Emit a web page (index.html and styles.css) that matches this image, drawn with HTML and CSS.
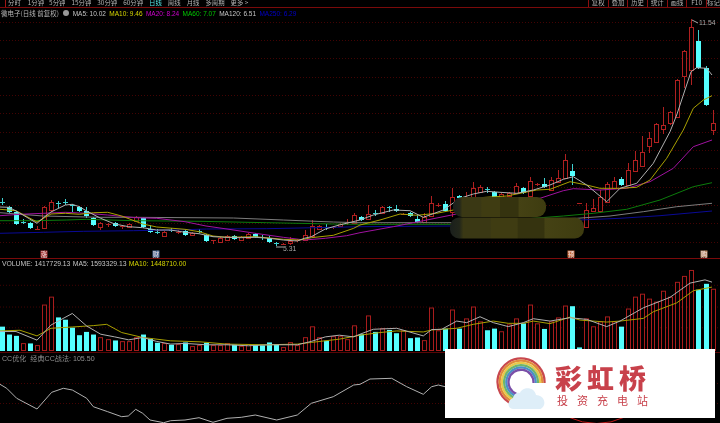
FILE: index.html
```html
<!DOCTYPE html>
<html lang="zh">
<head>
<meta charset="utf-8">
<title>微电子 日线</title>
<link rel="stylesheet" href="styles.css">
</head>
<body>
<div class="screen">
  <nav class="toolbar">
    <div class="periods">
      <span class="tick"></span>
      <span class="p p1">分时</span><span class="p p2">1分钟</span><span class="p p3">5分钟</span><span class="p p4">15分钟</span><span class="p p5">30分钟</span><span class="p p6">60分钟</span><span class="p p7 active">日线</span><span class="p p8">周线</span><span class="p p9">月线</span><span class="p p10">多周期</span><span class="p p11">更多 &gt;</span>
    </div>
    <div class="tools">
      <span>复权</span><span>叠加</span><span>历史</span><span>统计</span><span>画线</span><span>F10</span><span>标记</span>
    </div>
  </nav>

  <section class="panel main-panel">
    <div class="legend main-legend">
      <span class="stock">微电子(日线 前复权)</span>
      <i class="dot"></i>
      <span class="grey">MA5: 10.02</span>
      <span class="yellow">MA10: 9.46</span>
      <span class="magenta">MA20: 8.24</span>
      <span class="green">MA60: 7.07</span>
      <span class="grey">MA120: 6.51</span>
      <span class="blue">MA250: 6.29</span>
    </div>
    <svg id="price" class="chart" viewBox="0 18 720 240" preserveAspectRatio="none"></svg>
  </section>

  <section class="panel vol-panel">
    <div class="legend vol-legend">
      <span class="grey">VOLUME: 1417729.13</span>
      <span class="grey">MA5: 1593329.13</span>
      <span class="yellow">MA10: 1448710.00</span>
    </div>
    <svg id="volume" class="chart" viewBox="0 268 720 85" preserveAspectRatio="none"></svg>
  </section>

  <section class="panel cc-panel">
    <div class="legend cc-legend">
      <span class="dim">CC优化&nbsp; 经典CC战法: 105.50</span>
    </div>
    <svg id="cc" class="chart" viewBox="0 362 720 61" preserveAspectRatio="none"></svg>
  </section>

  <aside class="watermark">
    <svg class="logo" viewBox="0 0 60 60" width="60" height="60">
      <g fill="none" stroke-width="2.3">
        <path stroke="#c8484e" d="M53.5 31A23.5 23.5 0 1 0 22 52"/>
        <path stroke="#e08a3c" d="M51.3 31A21.3 21.3 0 1 0 22.7 50"/>
        <path stroke="#e8c84a" d="M49.1 31A19.1 19.1 0 1 0 23.5 48"/>
        <path stroke="#6fb56a" d="M46.9 31A16.9 16.9 0 1 0 24.2 46"/>
        <path stroke="#4a90c8" d="M44.7 31A14.7 14.7 0 1 0 25 44"/>
        <path stroke="#7a4fa8" d="M42.5 31A12.5 12.5 0 1 0 25.7 42"/>
      </g>
      <path fill="#deeef8" d="M22 57C16 57 16 48 22 46C23 41 27 40 29 41C31 35 43 34 45 43C53 43 56 52 51 56C50 57 49 57 47 57Z"/>
    </svg>
    <div class="brand">
      <strong>彩虹桥</strong>
      <span>投资充电站</span>
    </div>
  </aside>
</div>
<script src="chart.js"></script>
</body>
</html>
```
FILE: styles.css
```css
* { box-sizing: border-box; }
html, body { margin: 0; padding: 0; background: #000; }
.screen {
  position: relative;
  width: 720px;
  height: 423px;
  overflow: hidden;
  display: flex;
  flex-direction: column;
  background: #000;
  font-family: "Liberation Sans", "Noto Sans CJK SC", sans-serif;
  filter: blur(0.3px);
}
.toolbar {
  flex: none;
  height: 8px;
  display: flex;
  justify-content: space-between;
  border-bottom: 1px solid #7a0a0a;
  font: 6.4px/6px "Noto Sans CJK SC", sans-serif;
  color: #b4b4b4;
}
.periods { display: flex; align-items: flex-start; }
.tick { width: 6px; height: 7px; border-right: 1px solid #a01515; }
.p { margin-left: 6px; white-space: nowrap; }
.p1 { margin-left: 2px; }
.p2 { margin-left: 7px; }
.p3 { margin-left: 5px; }
.p7 { margin-left: 6px; }
.active { color: #55e8e8; }
.tools { display: flex; }
.tools span {
  width: 19.7px;
  height: 7px;
  border-left: 1px solid #8a1010;
  text-align: center;
  white-space: nowrap;
}
.tools span:last-child { width: 14px; }
.panel { display: flex; flex-direction: column; flex: none; }
.main-panel { height: 251px; border-bottom: 1px solid #7a0a0a; }
.vol-panel { height: 94px; border-bottom: 1px solid #5a0606; }
.cc-panel { flex: 1; min-height: 0; }
.legend {
  flex: none;
  display: flex;
  align-items: center;
  white-space: nowrap;
  font-size: 6.8px;
}
.main-legend { height: 10px; padding-left: 1px; gap: 3.4px; font-size: 6.5px; }
.stock { font: 6.5px "Noto Sans CJK SC", sans-serif; color: #b8b8b8; }
.dot { width: 6px; height: 6px; border-radius: 50%; background: #999; margin-left: 1px; }
.vol-legend { height: 9px; padding-left: 2px; gap: 2.4px; }
.cc-legend { height: 9px; padding-left: 2px; }
.dim { color: #8e8e8e; font: 7.1px "Liberation Sans", "Noto Sans CJK SC", sans-serif; }
.grey { color: #c4c4c4; }
.yellow { color: #d4d400; }
.magenta { color: #d000d0; }
.green { color: #00c800; }
.blue { color: #0000c8; }
.chart { display: block; width: 100%; flex: 1; min-height: 0; }

/* chart drawing, built by chart.js */
.grid { stroke: #430303; stroke-width: 1; stroke-dasharray: 1 2; fill: none; }
.wick-r { stroke: #b02020; stroke-width: 1; }
.wick-c { stroke: #3fd0d0; stroke-width: 1; }
.body-r { fill: #000; stroke: #b02020; stroke-width: 1; }
.body-c { fill: #55ffff; }
.vol-r { fill: #000; stroke: #a81c1c; stroke-width: 1; }
.vol-c { fill: #55ffff; }
.line { fill: none; stroke-width: 1; stroke-linejoin: round; }
.l-white { stroke: #b0b0b0; }
.l-yellow { stroke: #a8a000; }
.l-magenta { stroke: #a012a0; }
.l-green { stroke: #0c7c0c; }
.l-grey { stroke: #7c7c7c; }
.l-blue { stroke: #0a0a96; }
.smudge { fill: url(#olive); }
.note { font: 6.8px "Liberation Sans", sans-serif; fill: #a8a8a8; }
.note-line { stroke: #a8a8a8; stroke-width: 1; fill: none; }
.mark-text { font: 6.5px "Noto Sans CJK SC", sans-serif; fill: #f0e0e0; text-anchor: middle; }
.ellipse { fill: none; stroke: #c01818; stroke-width: 1; }

/* overlay advert */
.watermark {
  position: absolute;
  left: 445px;
  top: 349px;
  width: 270px;
  height: 69px;
  background: #fff;
  display: flex;
  align-items: flex-start;
  padding: 3px 0 0 46px;
  gap: 4px;
}
.logo { flex: none; display: block; }
.brand {
  display: flex;
  flex-direction: column;
  font-family: "Noto Sans CJK SC", sans-serif;
  color: #c8414b;
  white-space: nowrap;
}
.brand strong { font-size: 27px; line-height: 26px; letter-spacing: 5px; margin-top: 13px; font-weight: 900; }
.brand span { font-size: 11px; line-height: 13px; letter-spacing: 9px; margin-top: 3px; margin-left: 2px; }
```
FILE: chart.js
```js
var NS = 'http://www.w3.org/2000/svg';
var SP = 7.035;
function X(i) { return 2 + SP * i; }
function add(svg, name, attrs, text) {
  var el = document.createElementNS(NS, name);
  for (var k in attrs) el.setAttribute(k, attrs[k]);
  if (text) el.textContent = text;
  svg.appendChild(el);
  return el;
}
function grid(svg, ys) {
  ys.forEach(function (y) {
    add(svg, 'line', { 'class': 'grid', x1: 0, x2: 720, y1: y, y2: y });
  });
}
function half(v) { return Math.round(v) + 0.5; }
/* points read from enlarged crops: px = 3x, py = 3(y - base) */
function line(svg, cls, base, pts) {
  var s = pts.map(function (p) { return (p[0] / 3).toFixed(1) + ',' + (base + p[1] / 3).toFixed(1); }).join(' ');
  add(svg, 'polyline', { 'class': 'line ' + cls, points: s });
}
/* join a left-half list and a right-half list (right px offset by 360*3) */
function join(a, b) {
  return a.concat(b.map(function (p) { return [p[0] + 1080, p[1]]; }));
}

var price = document.getElementById('price');
var defs = add(price, 'defs', {});
var g = add(defs, 'linearGradient', { id: 'olive', x1: 0, x2: 1, y1: 0, y2: 0 });
[[0, '#1a1f1c'], [0.07, '#22261a'], [0.1, '#3a3814'], [0.3, '#3a3814'], [0.31, '#3f3c12'], [0.5, '#3f3c12'], [0.51, '#35330f'], [0.7, '#35330f'], [0.71, '#454214'], [1, '#3e3c10']].forEach(function (s) {
  add(g, 'stop', { offset: s[0], 'stop-color': s[1] });
});
var gy = [];
for (var k = 0; k < 13; k++) gy.push(Math.round(21.5 + 18.35 * k) + 0.5);
grid(price, gy);

var C = [
['c',202,202.5,198,205],['c',207,212,206,213],['c',212,224,211,225],['c',221.5,222,219,224],['c',223,228,222,229],
['r',228.5,229,226,230],['r',207,228,206,229],['r',202,210,200,212],['c',203,203.5,201,208],['c',202,202.5,199,205],
['c',204.5,205,204,212],['c',207,211,206,212],['c',211,216,207,218],['c',218,225,217,226],['r',223,227,222,230],
['r',223.5,224,223,227],['c',223,226,222,227],['r',226,226.5,225,229],['r',224,227,223,228],['r',217,221,216,222],
['c',218,227,217,228],['c',229,232,225,233],['c',232,232.5,229,234],['r',232,236,231,237],['c',230,230.5,228,232],
['r',232,232.5,230,234],['c',231,235,229,236],['r',233,235,232,236],['c',230.5,231,229,233],['c',235,241,234,242],
['r',240.3,240.8,240,244],['r',238,242,237,243],['r',236,240,235,241],['c',236,239,235,240],['r',237,240,236,241],
['r',234,238,233,239],['c',234,237,233,238],['c',237,237.5,235,240],['c',238,242,236,243],['c',242.5,243,242,246],
['r',243.5,244,243,245],['r',240.7,243,237,245],['r',240,240.5,239,242],['r',235,240,230,241],['r',226,236,220,237],
['r',226,229,225,230],['c',227,227.5,224,230],['r',227,227.5,226,229],['r',224,226,223,227],['r',222,222.5,219,225],
['r',215,223,213,224],['c',217,220,216,221],['r',214,219,205,220],['c',212.5,213,210,216],['r',207,213,206,214],
['c',207,207.5,206,212],['c',209,211,205,212],['r',214,214.5,213,215],['c',213,216,212,217],['c',219,222,215,223],
['r',217,222,213,223],['r',203,216,196,217],['r',204.5,205,203,207],['c',204,211,201,212],['r',197,212,188,217],
['c',196,198,195,199],['r',197,205,192,206],['r',188,197,182,198],['r',187,192,185,193],['c',189,189.5,187,193],
['c',192,199,191,200],['r',194,197,193,198],['r',193,196,192,197],['r',186,193,183,194],['c',188,193,187,194],
['r',181,196,177,197],['r',184,184.5,183,186],['c',184,187,178,188],['r',180,190,177,191],['r',178,182,170,183],
['r',160,178,154,179],['c',171,176,164,185],['r',203,203.5,203,204],['r',210,227,203,228],['r',208,211,199,212],
['r',197,211,190,213],['r',184,202,182,203],['r',181,188,177,189],['c',179,185,177,186],['r',170,185,163,186],
['r',160,171,151,172],['r',152,166,136,167],['r',138,146,132,153],['r',124,142,123,143],['r',125,129,107,134],
['r',112,123,111,125],['r',80,117,79,118],['r',51,76,50,88],['r',27,70,19,85],['c',41,68,30,69],['c',68,105,66,106],
['r',123,130,110,135]
];
C.forEach(function (d, i) {
  var x = half(X(i));
  add(price, 'line', { 'class': 'wick-' + d[0], x1: x, x2: x, y1: d[3], y2: d[4] });
  if (d[2] - d[1] < 1) {
    var yy = half(d[1]);
    add(price, 'line', { 'class': 'wick-' + d[0], x1: x - 2.5, x2: x + 2.5, y1: yy, y2: yy });
  } else if (d[0] === 'r') {
    var t = half(d[1]), b = half(d[2]);
    add(price, 'rect', { 'class': 'body-r', x: x - 2, y: t, width: 4, height: b - t });
  } else {
    add(price, 'rect', { 'class': 'body-c', x: x - 2.5, y: d[1], width: 5, height: d[2] - d[1] });
  }
});

/* moving averages: y = 130 + py/3 in the lower crops */
line(price, 'l-blue', 130, join(
  [[0,310],[130,307],[250,304],[400,302],[520,300],[620,297],[800,296],[1000,292]],
  [[0,290],[270,288],[660,270],[780,265],[900,257],[1056,243]]));
line(price, 'l-grey', 130, join(
  [[0,248],[130,258],[300,262],[400,262],[700,264],[850,270],[1000,276]],
  [[0,278],[280,278],[650,265],[750,258],[850,245],[950,230],[1056,220]]));
line(price, 'l-green', 130, join(
  [[0,272],[100,272],[200,270],[260,268],[400,272],[600,274],[800,278],[1000,282]],
  [[0,283],[280,283],[610,258],[700,250],[800,238],[900,210],[1000,170],[1056,158]]));
line(price, 'l-magenta', 130, join(
  [[0,257],[60,253],[130,250],[196,247],[260,250],[323,255],[407,263],[470,265],[555,275],[618,288],[681,297],[766,310],[850,322],[913,330],[976,325],[1040,317]],
  [[0,308],[100,290],[190,272],[290,252],[540,205],[610,182],[640,176],[720,180],[800,175],[870,155],[940,115],[1000,50],[1056,30]]));
line(price, 'l-yellow', 130, join(
  [[0,238],[48,242],[111,276],[153,252],[196,250],[238,253],[281,248],[323,247],[365,258],[428,282],[470,291],[555,298],[597,305],[639,318],[681,322],[766,320],[850,328],[900,330],[934,323],[1000,316],[1061,295]],
  [[0,285],[60,270],[120,252],[170,256],[230,250],[280,240],[330,205],[440,198],[530,180],[570,178],[630,155],[680,165],[720,175],[780,175],[830,172],[870,150],[920,85],[970,0],[1000,-65],[1030,-90],[1056,-103]]));
line(price, 'l-white', 130, join(
  [[0,231],[27,232],[48,243],[69,255],[111,280],[132,262],[153,246],[196,225],[217,223],[238,230],[260,243],[302,265],[344,282],[386,290],[428,293],[470,300],[512,300],[555,307],[597,311],[639,320],[681,322],[724,323],[766,322],[808,325],[850,330],[892,333],[913,325],[934,320],[976,297],[1018,285]],
  [[0,270],[40,255],[100,240],[150,242],[190,262],[250,240],[300,205],[340,192],[380,184],[420,187],[470,190],[520,180],[570,165],[610,148],[640,140],[680,165],[740,215],[780,175],[830,160],[880,100],[930,5],[950,-45],[993,-175],[1010,-187],[1040,-185],[1056,-165]]));

/* smudged-out area */
add(price, 'rect', { 'class': 'smudge', x: 453, y: 197, width: 93, height: 20, rx: 9 });
add(price, 'rect', { 'class': 'smudge', x: 450, y: 217.5, width: 134, height: 21, rx: 9 });

/* price callouts */
add(price, 'path', { 'class': 'note-line', d: 'M692 20l6 3' });
add(price, 'text', { 'class': 'note', x: 699, y: 25 }, '11.54');
add(price, 'path', { 'class': 'note-line', d: 'M276 247h7' });
add(price, 'text', { 'class': 'note', x: 283, y: 250.5 }, '5.31');

/* event marks */
[[44, '#a83a3a', '涨'], [156, '#4a6c9c', '财'], [571, '#c4683a', '预'], [704, '#b98a66', '购']].forEach(function (m) {
  add(price, 'rect', { x: m[0] - 3.5, y: 250.5, width: 7, height: 7, fill: m[1] });
  add(price, 'text', { 'class': 'mark-text', x: m[0], y: 256.5 }, m[2]);
});

/* volume */
var vol = document.getElementById('volume');
grid(vol, [285.5, 307.5, 328.5]);
var V = [
'c217','c241','c245','r266','c268','r274','r149','r127','c189','c196','c220','c243','c233','c241','r250','r254','c259','r261','r260','r248',
'c241','c254','c266','r268','c272','r270','c265','r276','r272','c266','r274','r274','r268','c272','r276','r270','c273','c274','c265','c272',
'r279','r263','r272','r248','r216','r250','c260','r245','r245','r255','r212','c240','r183','c233','r222','c227','c237','r228','c252','c250',
'r258','r158','r228','c223','r166','c223','r193','r157','r200','c228','c223','r232','r210','r193','c207','r149','r208','c224','r200','r190',
'r152','c155','c280','r193','r215','r200','r185','r200','c217','r163','r127','r116','r131','r140','r108','r125','r80','r62','r44','c105','c87','r103'
];
V.forEach(function (s, i) {
  var top = 255 + (+s.slice(1)) / 3;
  var x = half(X(i));
  if (s[0] === 'r') { top = half(top); add(vol, 'rect', { 'class': 'vol-r', x: x - 2, y: top, width: 4, height: 351.5 - top }); }
  else add(vol, 'rect', { 'class': 'vol-c', x: x - 2.5, y: top, width: 5, height: 352 - top });
});
line(vol, 'l-yellow', 255, join(
  [[0,230],[60,228],[111,245],[153,222],[217,218],[280,214],[320,210],[365,235],[428,250],[512,260],[600,263],[681,270],[800,272],[892,270],[934,265],[1018,255]],
  [[0,243],[60,235],[110,230],[190,233],[215,227],[290,222],[340,210],[400,200],[445,207],[490,207],[520,200],[570,208],[630,188],[660,197],[740,203],[780,200],[850,192],[880,172],[950,145],[1000,108],[1056,97]]));
line(vol, 'l-white', 255, join(
  [[0,232],[48,232],[111,258],[153,212],[217,177],[260,215],[302,240],[344,248],[386,257],[428,250],[470,262],[512,270],[555,268],[618,272],[681,272],[745,275],[808,272],[892,272],[934,262],[976,248],[1018,243],[1061,248]],
  [[0,240],[40,225],[110,222],[190,245],[215,226],[245,225],[290,200],[320,205],[360,187],[400,205],[445,217],[490,205],[520,193],[570,200],[630,190],[680,195],[740,217],[780,200],[850,160],[930,128],[990,85],[1035,75],[1056,82]]));

/* CC indicator */
var cc = document.getElementById('cc');
grid(cc, [383.5, 403.5]);
line(cc, 'l-white', 255, join(
  [[0,388],[20,400],[50,430],[111,462],[155,412],[190,400],[217,405],[260,430],[280,455],[323,470],[365,485],[385,483],[407,463],[428,475],[450,495],[491,503],[512,497],[555,495],[597,488],[639,502],[681,490],[724,487],[766,480],[830,495],[892,480],[934,445],[1000,425],[1061,390]],
  [[0,388],[30,372],[95,370],[140,395],[190,418],[215,395],[235,390],[255,395],[300,400]]));
add(cc, 'path', { 'class': 'ellipse', d: 'M568 417Q597 430 625 417' });
```
